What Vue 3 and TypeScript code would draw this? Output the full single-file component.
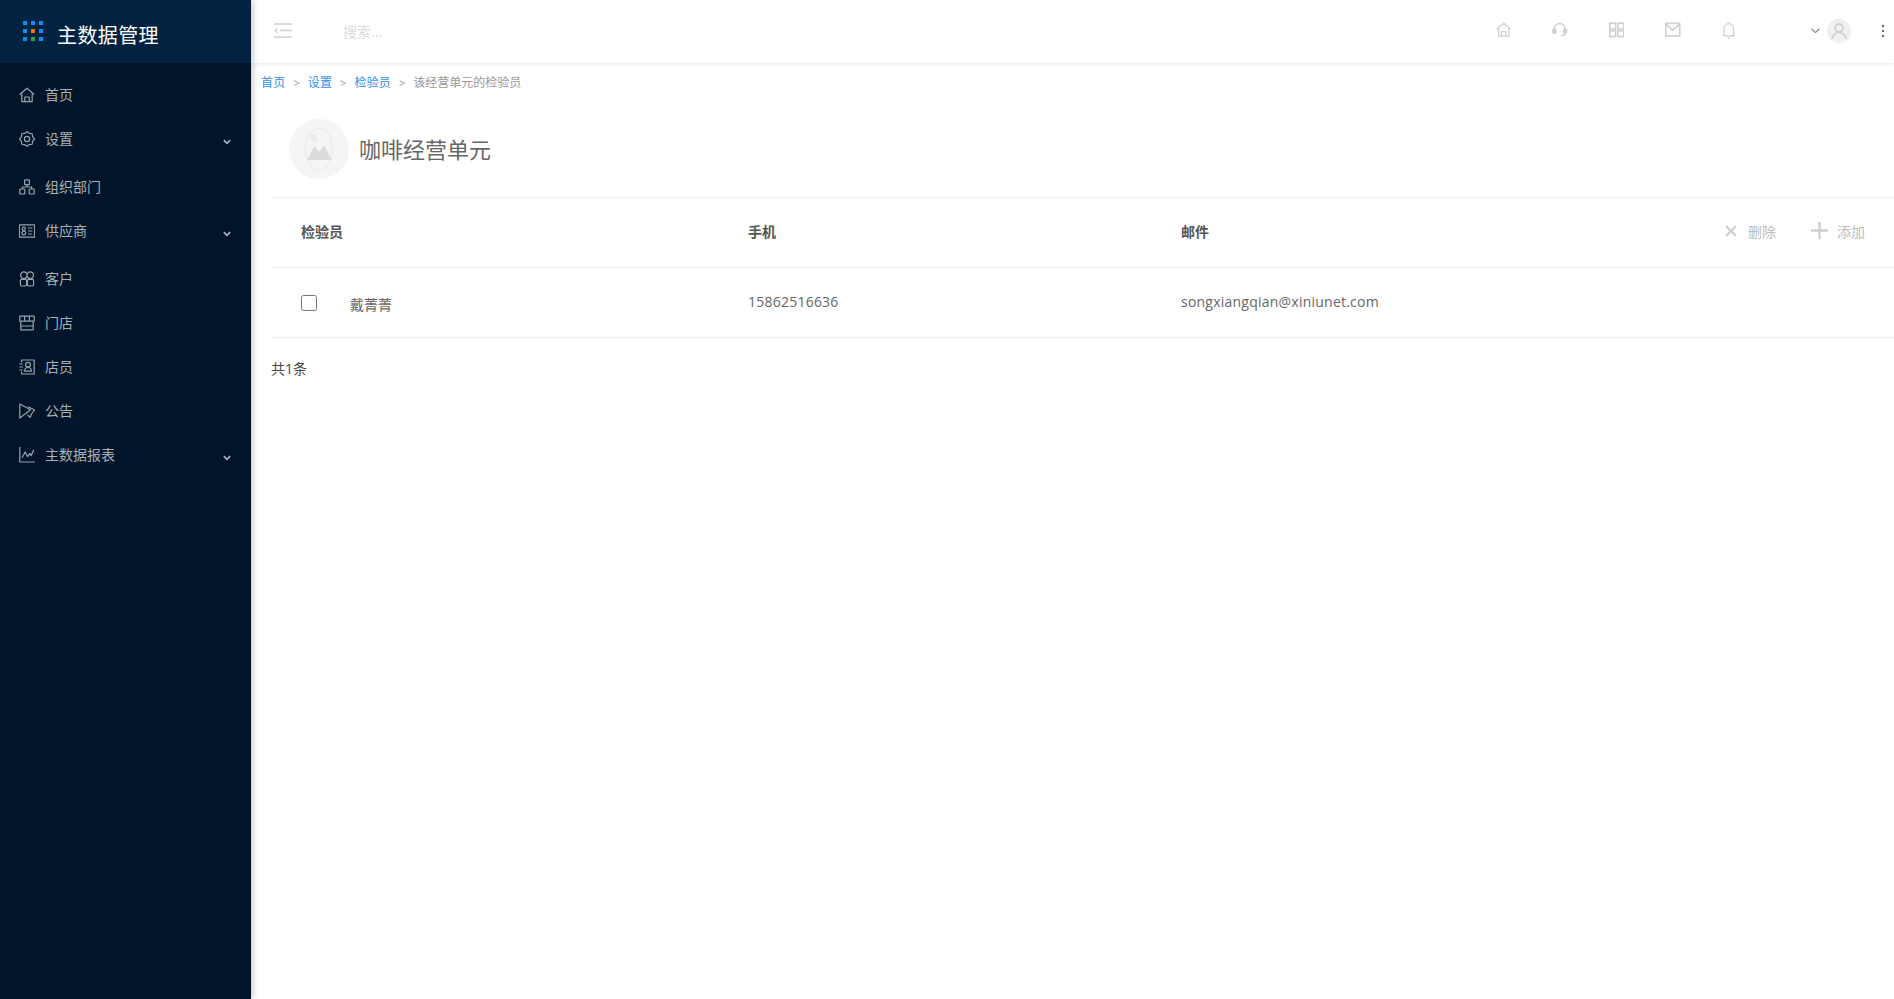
<script setup lang="ts">
interface NavItem {
  label: string
  icon: string
  sub?: boolean
}

const navItems: NavItem[] = [
  { label: '首页', icon: 'home' },
  { label: '设置', icon: 'gear', sub: true },
  { label: '组织部门', icon: 'org' },
  { label: '供应商', icon: 'card', sub: true },
  { label: '客户', icon: 'apps' },
  { label: '门店', icon: 'shop' },
  { label: '店员', icon: 'contact' },
  { label: '公告', icon: 'horn' },
  { label: '主数据报表', icon: 'chart', sub: true },
]

const logoDots = ['b', 'b', 'b', 'b', 'o', 'b', 'b', 'g', 'b']
</script>

<template>
  <div class="page">
    <aside class="sidebar">
      <div class="brand">
        <div class="dots">
          <i v-for="(d, i) in logoDots" :key="i" :class="'dot-' + d"></i>
        </div>
        <span class="brand-name">主数据管理</span>
      </div>
      <nav class="nav">
        <a v-for="item in navItems" :key="item.label" class="nav-row" :class="{ sub: item.sub }">
          <svg class="nav-icon" viewBox="0 0 16 16" fill="none" stroke="currentColor" stroke-width="1.2" stroke-linejoin="round">
            <template v-if="item.icon === 'home'">
              <path d="M.8 7.5 8 1.2l7.2 6.3" /><path d="M2.8 6.6v8h10.4v-8" /><path d="M5.8 14.6V10h4.4v4.6" />
            </template>
            <template v-else-if="item.icon === 'gear'">
              <path d="M8 .6 10.3 2.46 13.23 2.77 13.54 5.7 15.4 8 13.54 10.3 13.23 13.23 10.3 13.54 8 15.4 5.7 13.54 2.77 13.23 2.46 10.3 .6 8 2.46 5.7 2.77 2.77 5.7 2.46z" />
              <circle cx="8" cy="8" r="2.6" />
            </template>
            <template v-else-if="item.icon === 'org'">
              <rect x="5.6" y=".8" width="4.8" height="4.8" rx=".6" />
              <rect x=".8" y="10" width="5" height="5" rx=".6" />
              <rect x="10.2" y="10" width="5" height="5" rx=".6" />
              <path d="M8 5.6V8M3.3 10V8h9.4v2" />
            </template>
            <template v-else-if="item.icon === 'card'">
              <rect x=".4" y="1.8" width="15.2" height="12.4" />
              <circle cx="4.8" cy="5.8" r="1.6" /><circle cx="4.8" cy="10" r="1.9" />
              <path d="M9 5h4.4M9 8h4.4M9 11h4.4" />
            </template>
            <template v-else-if="item.icon === 'apps'">
              <path d="M4.8 7.6a3.2 3.4 0 1 1 0-6.8 3.2 3.4 0 0 1 0 6.8zM11.2 7.6a3.2 3.4 0 1 1 0-6.8 3.2 3.4 0 0 1 0 6.8z" />
              <rect x="1.4" y="8.3" width="6.2" height="6.7" rx="1.4" /><rect x="8.4" y="8.3" width="6.2" height="6.7" rx="1.4" />
            </template>
            <template v-else-if="item.icon === 'shop'">
              <path d="M.8 1.2h14.4v5H.8zM5.6 1.2v5M10.4 1.2v5" />
              <path d="M1.8 6.2v8.6h12.4V6.2M1.8 11h12.4" />
            </template>
            <template v-else-if="item.icon === 'contact'">
              <path d="M2.6 3.2V1h12.6v14H2.6v-2.2" />
              <path d="M.4 5h3.4M.4 8h3.4M.4 11h3.4" />
              <circle cx="9" cy="5.8" r="2.4" /><path d="M5.4 12.2c.3-2.6 1.8-3.7 3.6-3.7s3.3 1.1 3.6 3.7z" />
            </template>
            <template v-else-if="item.icon === 'horn'">
              <path d="M.8 1 11.6 6.8.8 15z" /><path d="M9 3.8 15.6 7l-3.2 4-1.2 3.4-2.6-2.4" />
            </template>
            <template v-else>
              <path d="M.8 0v15h15" /><path d="M3 10.8 6.2 5l2.4 4.6 2.3-3.2 1.3 2.2 2.6-5.8" />
            </template>
          </svg>
          <span class="nav-label">{{ item.label }}</span>
          <svg v-if="item.sub" class="nav-chevron" viewBox="0 0 8 6" fill="none" stroke="currentColor" stroke-width="1.7">
            <path d="M.8 1.2 4 4.4l3.2-3.2" />
          </svg>
        </a>
      </nav>
    </aside>

    <div class="content">
      <header class="topbar">
        <svg class="collapse" viewBox="0 0 18 15" fill="none" stroke="currentColor" stroke-width="1.6">
          <path d="M0 1h18M6 7.5h12M0 14h18" /><path d="M3.5 5.3 1 7.5l2.5 2.2" stroke-width="1.2" />
        </svg>
        <span class="search">搜索...</span>
        <div class="tools">
          <svg class="tool" viewBox="0 0 16 16" fill="none" stroke="currentColor" stroke-width="1.3">
            <path d="M.8 7.5 8 1.2l7.2 6.3" /><path d="M2.8 6.6v8h10.4v-8" /><path d="M5.8 14.6V10h4.4v4.6" />
          </svg>
          <svg class="tool" viewBox="0 0 16 16" fill="none" stroke="currentColor" stroke-width="1.5">
            <path d="M2.6 8.5V7a5.4 5.4 0 0 1 10.8 0v4c0 1.8-1.2 3-3 3H9" />
            <rect x="1" y="7.2" width="2.8" height="4.4" rx="1" fill="currentColor" />
            <rect x="12.2" y="7.2" width="2.8" height="4.4" rx="1" fill="currentColor" />
          </svg>
          <svg class="tool" viewBox="0 0 16 16" fill="none" stroke="currentColor" stroke-width="1.6">
            <rect x=".8" y="1.2" width="6" height="6" /><rect x="9.2" y="1.2" width="6" height="6" />
            <rect x=".8" y="9" width="6" height="6" /><rect x="9.2" y="9" width="6" height="6" />
          </svg>
          <svg class="tool" viewBox="0 0 16 16" fill="none" stroke="currentColor" stroke-width="1.6">
            <rect x=".8" y="1.4" width="14.4" height="13" /><path d="M1.2 2.2 8 8.6l6.8-6.4" />
          </svg>
          <svg class="tool tall" viewBox="0 0 14 18" fill="none" stroke="currentColor" stroke-width="1.3">
            <path d="M2 14.6V6.8a5 5 0 0 1 10 0v7.8M.4 14.8h13.2M5.6 17h2.8M7 .2v1.6" />
          </svg>
        </div>
        <div class="user">
          <svg class="user-chevron" viewBox="0 0 9 6" fill="none" stroke="currentColor" stroke-width="1.1">
            <path d="M.6 .8 4.5 4.6 8.4 .8" />
          </svg>
          <span class="user-avatar">
            <svg viewBox="0 0 24 24" fill="none" stroke="#c8c8c8" stroke-width="1.4">
              <circle cx="12" cy="9" r="4" /><path d="M5 20c.6-4 3-6.4 7-6.4s6.4 2.4 7 6.4" />
            </svg>
          </span>
          <span class="more"><i></i><i></i><i></i></span>
        </div>
      </header>

      <div class="breadcrumb">
        <a>首页</a><span class="sep">&gt;</span>
        <a>设置</a><span class="sep">&gt;</span>
        <a>检验员</a><span class="sep">&gt;</span>
        <span class="current">该经营单元的检验员</span>
      </div>

      <section class="panel">
        <div class="unit">
          <span class="unit-avatar">
            <svg viewBox="0 0 60 60">
              <ellipse cx="30" cy="30" rx="13.5" ry="21" fill="none" stroke="#ececec" stroke-width="1.4" />
              <circle cx="25" cy="19" r="4" fill="#ececec" />
              <path d="M18 41 25.5 27l4 6 5.5-6.5L43 41z" fill="#dcdcdc" />
            </svg>
          </span>
          <h1 class="unit-name">咖啡经营单元</h1>
        </div>

        <div class="grid head">
          <span class="col-name">检验员</span>
          <span class="col-phone">手机</span>
          <span class="col-mail">邮件</span>
          <div class="actions">
            <span class="action">
              <svg class="x-icon" viewBox="0 0 12 12" stroke="currentColor" stroke-width="2.4"><path d="M1 1l10 10M11 1 1 11" /></svg>
              删除
            </span>
            <span class="action">
              <svg class="plus-icon" viewBox="0 0 17 17" stroke="currentColor" stroke-width="2.4"><path d="M8.5 0v17M0 8.5h17" /></svg>
              添加
            </span>
          </div>
        </div>

        <div class="grid row">
          <label class="col-name person">
            <input type="checkbox" class="check" />
            <span class="person-name">戴菁菁</span>
          </label>
          <span class="col-phone value">15862516636</span>
          <span class="col-mail value">songxiangqian@xiniunet.com</span>
        </div>

        <p class="total">共1条</p>
      </section>
    </div>
  </div>
</template>

<style>
html, body { margin: 0; padding: 0; background: #fff; overflow: hidden; }
</style>

<style scoped>
.page {
  display: flex;
  height: 999px;
  font-family: "Open Sans", "Noto Sans CJK SC", sans-serif;
  font-size: 14px;
  color: #666;
}

.sidebar {
  flex: 0 0 251px;
  background: #00152a;
  box-shadow: 2px 0 6px rgba(0, 0, 0, .22);
  position: relative;
  z-index: 2;
}
.brand {
  height: 63px;
  background: #012241;
  display: flex;
  align-items: center;
  padding-left: 23px;
  gap: 14px;
}
.dots {
  display: grid;
  grid-template-columns: repeat(3, 4px);
  grid-auto-rows: 4px;
  gap: 4px;
  margin-top: -2px;
}
.dots i { display: block; }
.dot-b { background: #0a8df5; }
.dot-o { background: #f46f0c; }
.dot-g { background: #2ba640; }
.brand-name {
  color: #fff;
  font-size: 20px;
  letter-spacing: .4px;
  line-height: 28px;
  margin-top: 8px;
}
.nav {
  padding-top: 10px;
}
.nav-row {
  height: 44px;
  display: flex;
  align-items: center;
  padding-left: 19px;
  color: #a9b0b7;
  position: relative;
}
.nav-row.sub {
  margin-bottom: 4px;
}
.nav-icon {
  width: 16px;
  height: 16px;
  flex: none;
  color: #98a2ab;
}
.nav-label {
  margin-left: 10px;
  line-height: 20px;
}
.nav-chevron {
  position: absolute;
  left: 223px;
  top: 22px;
  width: 8px;
  height: 6px;
  color: #a9b0b7;
}

.content {
  flex: 1;
  min-width: 0;
}
.topbar {
  height: 63px;
  display: flex;
  align-items: center;
  padding-left: 23px;
  background: #fff;
  box-shadow: 0 1px 4px rgba(0, 0, 0, .1);
  position: relative;
}
.collapse {
  width: 18px;
  height: 15px;
  color: #d0d0d0;
  flex: none;
  margin-top: -3px;
}
.search {
  margin-left: 51px;
  color: #dcdcdc;
  line-height: 20px;
  margin-top: 1px;
}
.tools {
  margin-left: auto;
  display: flex;
  align-items: center;
  gap: 41px;
  color: #cfcfcf;
  margin-top: -3px;
}
.tool {
  width: 15.5px;
  height: 15.5px;
  display: block;
}
.tool.tall {
  height: 17px;
  width: 13.5px;
}
.user {
  display: flex;
  align-items: center;
  margin-left: 76px;
  margin-top: -2px;
}
.user-chevron {
  width: 9px;
  height: 6px;
  color: #777;
}
.user-avatar {
  width: 24px;
  height: 24px;
  margin-left: 7px;
  border-radius: 50%;
  background: #f0f0f0;
  display: block;
}
.user-avatar svg { display: block; }
.more {
  display: flex;
  flex-direction: column;
  gap: 3px;
  margin-left: 31px;
  margin-right: 10px;
}
.more i {
  display: block;
  width: 2px;
  height: 2px;
  background: #666;
}

.breadcrumb {
  padding: 6px 0 0 10px;
  margin-bottom: 6px;
  height: 27px;
  font-size: 12px;
  line-height: 18px;
  display: flex;
  align-items: center;
  box-sizing: content-box;
}
.breadcrumb a { color: #2f8ff0; letter-spacing: .2px; }
.sep {
  color: #999;
  margin: 0 8px;
  font-size: 11px;
}
.current { color: #999; }

.panel {
  padding-left: 20px;
}
.unit {
  display: flex;
  align-items: center;
  height: 97px;
  padding-left: 18px;
  margin-top: -1px;
  border-bottom: 1px solid #ededed;
  box-sizing: border-box;
}
.unit-avatar {
  width: 60px;
  height: 60px;
  border-radius: 50%;
  background: #f5f5f5;
  display: block;
  flex: none;
  margin-top: -1px;
}
.unit-avatar svg { display: block; }
.unit-name {
  margin: -1px 0 0 10px;
  font-size: 22px;
  line-height: 30px;
  font-weight: 400;
  color: #666;
}

.grid {
  display: grid;
  grid-template-columns: 447px 433px 1fr auto;
  align-items: center;
  height: 70px;
  padding-left: 30px;
  border-bottom: 1px solid #ededed;
  box-sizing: border-box;
}
.head {
  font-weight: 700;
  color: #555;
  font-size: 14px;
  padding-bottom: 4px;
}
.row {
  padding-bottom: 2px;
}
.actions {
  display: flex;
  gap: 35px;
  padding-right: 29px;
  color: #bcbcbc;
  font-weight: 400;
  font-size: 14px;
}
.action {
  display: flex;
  align-items: center;
}
.x-icon {
  width: 12px;
  height: 12px;
  margin-right: 11px;
  color: #d0d0d0;
}
.plus-icon {
  width: 17px;
  height: 17px;
  margin-right: 9px;
  color: #cfcfcf;
}
.person {
  display: flex;
  align-items: center;
}
.check {
  width: 16px;
  height: 16px;
  margin: 2px 0 0;
}
.person-name {
  margin-left: 33px;
  margin-top: 5px;
}
.value {
  letter-spacing: .23px;
}
.total {
  margin: 0;
  padding-top: 21px;
  line-height: 20px;
  color: #444;
}
</style>
